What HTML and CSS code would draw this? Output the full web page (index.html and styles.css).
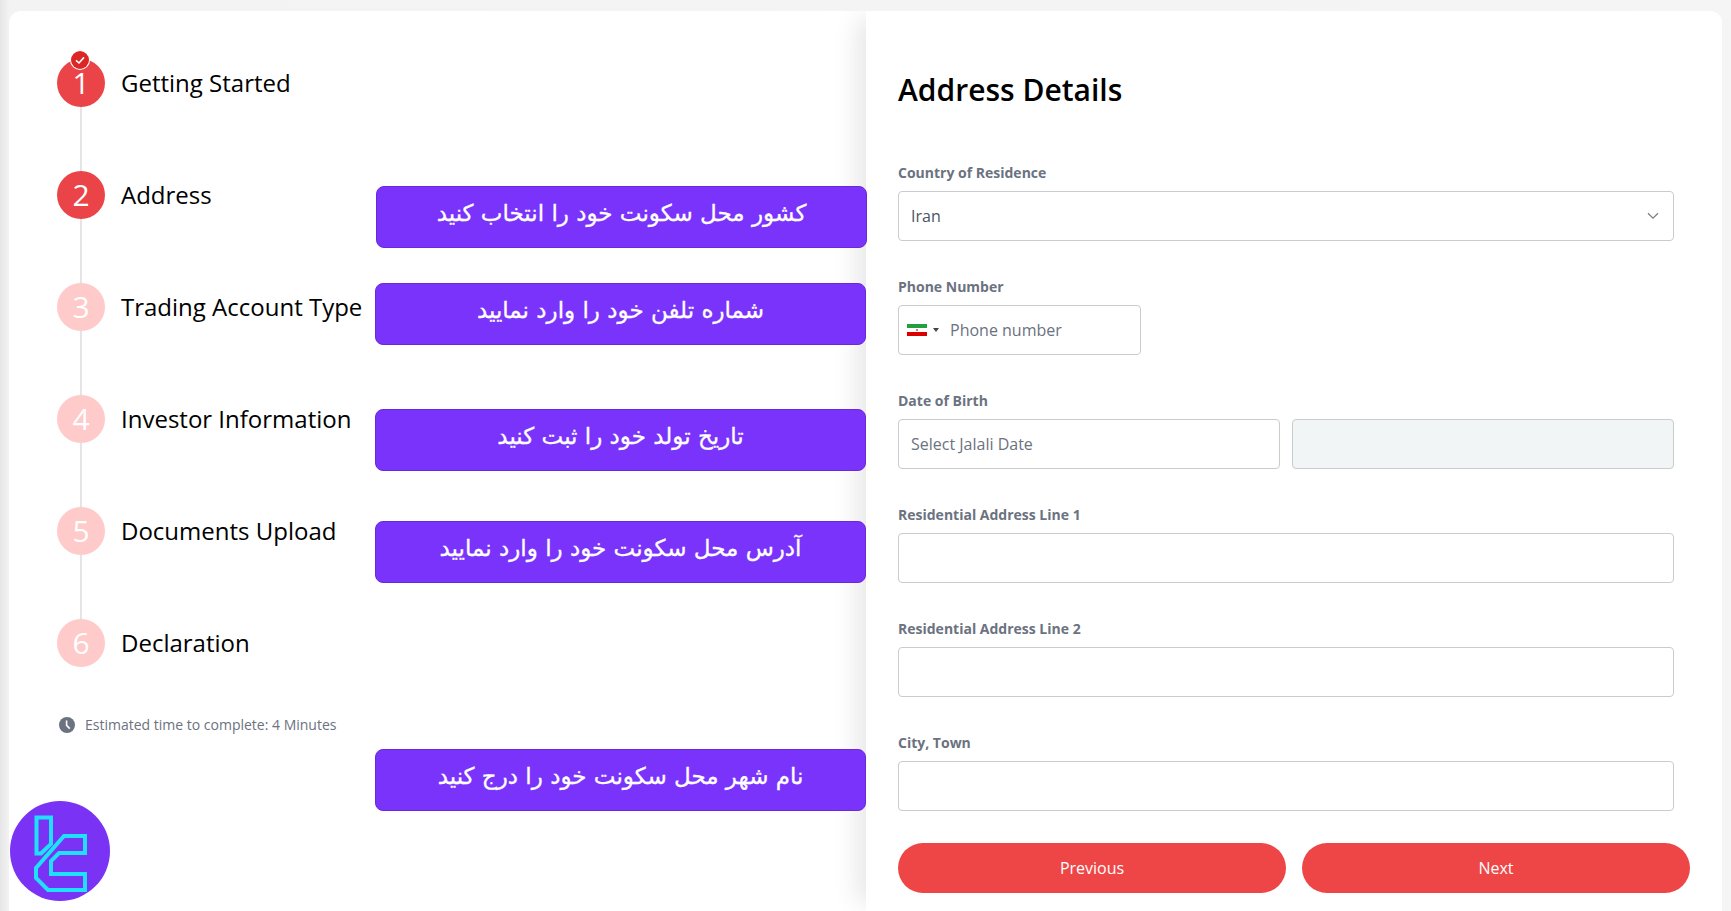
FILE: index.html
```html
<!DOCTYPE html>
<html lang="en">
<head>
<meta charset="utf-8">
<title>Address Details</title>
<link rel="stylesheet" href="styles.css">
</head>
<body>
<main class="card">
  <section class="steps-panel">
    <ol class="steps">
      <li class="step active">
        <span class="num">1<span class="done"><svg viewBox="0 0 16 16" width="16" height="16"><path d="M4 8.4 7 11l5-5.6" fill="none" stroke="#fff" stroke-width="1.6"/></svg></span></span>
        <span class="step-label">Getting Started</span>
      </li>
      <li class="step active"><span class="num">2</span><span class="step-label">Address</span></li>
      <li class="step"><span class="num">3</span><span class="step-label">Trading Account Type</span></li>
      <li class="step"><span class="num">4</span><span class="step-label">Investor Information</span></li>
      <li class="step"><span class="num">5</span><span class="step-label">Documents Upload</span></li>
      <li class="step"><span class="num">6</span><span class="step-label">Declaration</span></li>
    </ol>
    <p class="estimate">
      <svg viewBox="0 0 16 16" width="16" height="16"><circle cx="8" cy="8" r="8" fill="#6b7280"/><path d="M7.6 3.4V8.4L10.8 11.6" fill="none" stroke="#fff" stroke-width="1.6"/></svg>
      Estimated time to complete: 4 Minutes
    </p>
  </section>

  <section class="form-panel">
    <h1 class="title">Address Details</h1>
    <form class="form">
      <div class="field">
        <label class="label">Country of Residence</label>
        <div class="input select"><span>Iran</span>
          <svg viewBox="0 0 12 8" width="12" height="8"><path d="M1 1.2 6 6.2 11 1.2" fill="none" stroke="#7b8087" stroke-width="1.3"/></svg>
        </div>
      </div>
      <div class="field">
        <label class="label">Phone Number</label>
        <div class="input phone">
          <svg class="flag" viewBox="0 0 20 12" width="20" height="12"><rect width="20" height="4" fill="#239f40"/><rect y="4" width="20" height="4" fill="#fff"/><rect y="8" width="20" height="4" fill="#da0000"/><circle cx="10" cy="6" r="1.1" fill="#c06060"/></svg>
          <span class="caret"></span>
          <span class="placeholder">Phone number</span>
        </div>
      </div>
      <div class="field">
        <label class="label">Date of Birth</label>
        <div class="date-row">
          <div class="input"><span class="placeholder">Select Jalali Date</span></div>
          <div class="input disabled"></div>
        </div>
      </div>
      <div class="field">
        <label class="label">Residential Address Line 1</label>
        <div class="input"></div>
      </div>
      <div class="field">
        <label class="label">Residential Address Line 2</label>
        <div class="input"></div>
      </div>
      <div class="field">
        <label class="label">City, Town</label>
        <div class="input"></div>
      </div>
      <div class="actions">
        <button type="button" class="btn">Previous</button>
        <button type="button" class="btn">Next</button>
      </div>
    </form>
  </section>
</main>

<div class="note note-1" dir="rtl" lang="fa">کشور محل سکونت خود را انتخاب کنید</div>
<div class="note note-2" dir="rtl" lang="fa">شماره تلفن خود را وارد نمایید</div>
<div class="note note-3" dir="rtl" lang="fa">تاریخ تولد خود را ثبت کنید</div>
<div class="note note-4" dir="rtl" lang="fa">آدرس محل سکونت خود را وارد نمایید</div>
<div class="note note-5" dir="rtl" lang="fa">نام شهر محل سکونت خود را درج کنید</div>

<svg class="logo" viewBox="0 0 100 100" width="100" height="100">
  <circle cx="50" cy="50" r="50" fill="#7a33f5"/>
  <g fill="none" stroke="#1fe0ff" stroke-width="4">
    <path d="M26.5 16.5H41V43L31 52.5H26.5Z"/>
    <path d="M54 35H75V52H49L41 60V73H75V89H38L26 77V67Z"/>
  </g>
</svg>
</body>
</html>
```

FILE: styles.css
```css
* { box-sizing: border-box; }

html, body {
  height: 100%;
  margin: 0;
}

body {
  padding: 11px 9px 0;
  overflow: hidden;
  background: linear-gradient(90deg, #e6e6e6 0, #f3f3f3 9px, #f5f5f5 100%);
  font-family: "Open Sans", "Noto Sans", sans-serif;
  color: #000;
}

.card {
  display: flex;
  height: 900px;
  background: #fff;
  border-radius: 12px 12px 0 0;
  overflow: hidden;
}

.steps-panel {
  flex: 0 0 857px;
  padding: 48px 0 0 48px;
}

.steps {
  list-style: none;
  margin: 0;
  padding: 0;
}

.step {
  position: relative;
  display: flex;
  align-items: center;
  gap: 16px;
  height: 48px;
  margin-bottom: 64px;
  font-size: 24px;
  line-height: 32px;
}

.step:not(:last-child)::after {
  content: "";
  position: absolute;
  left: 23px;
  top: 48px;
  width: 2px;
  height: 64px;
  background: #e5e5e5;
}

.num {
  position: relative;
  flex: none;
  display: flex;
  align-items: center;
  justify-content: center;
  width: 48px;
  height: 48px;
  border-radius: 50%;
  background: #fecaca;
  color: #fff;
  font-size: 30px;
  font-weight: 500;
}

.active .num { background: #ea4448; }

.done {
  position: absolute;
  top: -8px;
  left: 14px;
  display: flex;
  align-items: center;
  justify-content: center;
  width: 18px;
  height: 18px;
  border-radius: 50%;
  background: #dc2626;
  box-shadow: 0 0 0 1px #fff;
}

.estimate {
  display: flex;
  align-items: center;
  gap: 10px;
  margin: -16px 0 0 2px;
  font-size: 14px;
  line-height: 20px;
  color: #6b7280;
}

.form-panel {
  flex: 1;
  padding: 0 32px;
  box-shadow: -16px 0 24px -8px rgba(0, 0, 0, .1);
  position: relative;
  background: #fff;
}

.title {
  margin: 0;
  padding-top: 57px;
  font-size: 30px;
  line-height: 44px;
  font-weight: 600;
}

.form {
  margin-top: 49px;
}

.field {
  width: 776px;
  margin-bottom: 34px;
}

.label {
  display: block;
  margin-bottom: 6px;
  font-size: 14px;
  line-height: 24px;
  font-weight: 700;
  color: #6b7280;
  height: 24px;
}

.input {
  display: flex;
  align-items: center;
  height: 50px;
  padding: 0 12px;
  border: 1px solid #c9cbce;
  border-radius: 4px;
  background: #fff;
  font-size: 16px;
  color: #4b5563;
}

.select { justify-content: space-between; padding-right: 14px; }

.phone {
  width: 243px;
  padding-left: 8px;
}

.flag { flex: none; }

.caret {
  flex: none;
  width: 0;
  height: 0;
  margin-left: 6px;
  border-left: 3px solid transparent;
  border-right: 3px solid transparent;
  border-top: 4px solid #444;
}

.phone .placeholder { margin-left: 11px; }

.placeholder { color: #6b7280; }

.date-row {
  display: grid;
  grid-template-columns: 1fr 1fr;
  gap: 12px;
}

.disabled { background: #f2f5f6; }

.actions {
  display: grid;
  grid-template-columns: 388px 388px;
  gap: 16px;
  margin-top: -2px;
}

.btn {
  height: 50px;
  border: 0;
  border-radius: 25px;
  background: #ee4646;
  color: #fff;
  font: 400 16px "Open Sans", sans-serif;
}

.note {
  position: absolute;
  left: 375px;
  width: 491px;
  height: 62px;
  display: flex;
  align-items: center;
  justify-content: center;
  padding-bottom: 8px;
  background: #7a33fb;
  border: 1px solid #6a28d9;
  border-radius: 8px;
  color: #fff;
  font-family: "DejaVu Sans", "Noto Sans", sans-serif;
  font-size: 23px;
  line-height: 30px;
  -webkit-text-stroke: 0.3px #fff;
}

.note-1 { left: 376px; top: 186px; }
.note-2 { top: 283px; }
.note-3 { top: 409px; }
.note-4 { top: 521px; }
.note-5 { top: 749px; }

.logo {
  position: absolute;
  left: 10px;
  top: 801px;
}
```
